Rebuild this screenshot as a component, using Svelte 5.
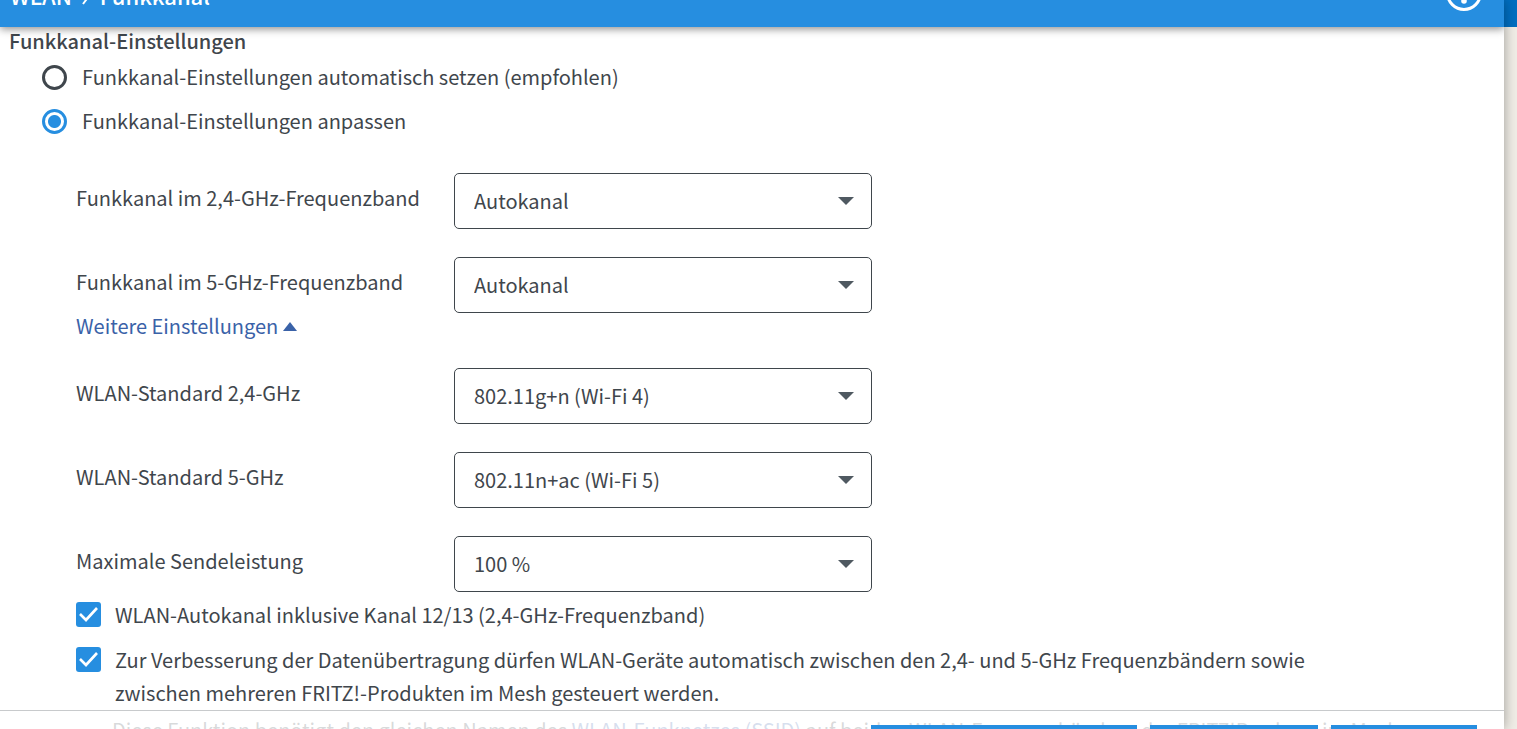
<script>
  let mode = "manual";
  let showMore = true;

  let channels = [
    { id: "channel24", label: "Funkkanal im 2,4-GHz-Frequenzband", value: "Autokanal" },
    { id: "channel5", label: "Funkkanal im 5-GHz-Frequenzband", value: "Autokanal" },
  ];

  let advanced = [
    { id: "standard24", label: "WLAN-Standard 2,4-GHz", value: "802.11g+n (Wi-Fi 4)" },
    { id: "standard5", label: "WLAN-Standard 5-GHz", value: "802.11n+ac (Wi-Fi 5)" },
    { id: "power", label: "Maximale Sendeleistung", value: "100 %" },
  ];

  let autoExtended = true;
  let steering = true;

  const toggleMore = () => {
    showMore = !showMore;
  };
</script>

{#snippet selectRow(item)}
  <div class="row">
    <label for={item.id}>{item.label}</label>
    <div class="select">
      <select id={item.id}>
        <option>{item.value}</option>
      </select>
      <svg width="16" height="8" viewBox="0 0 16 8" aria-hidden="true">
        <path d="M0 0h16L8 8z" fill="#4f5961" />
      </svg>
    </div>
  </div>
{/snippet}

<div class="panel">
  <header>
    <h1>
      WLAN
      <svg width="10" height="18" viewBox="0 0 10 18" aria-hidden="true">
        <path d="M2 1l6 8-6 8" fill="none" stroke="#fff" stroke-width="2" />
      </svg>
      Funkkanal
    </h1>
    <a class="help" href="#help" aria-label="Hilfe">
      <svg width="36" height="36" viewBox="0 0 36 36" aria-hidden="true">
        <circle cx="18" cy="18" r="16.5" fill="none" stroke="#fff" stroke-width="3" />
        <path d="M12 14c0-8 12-8 12 0 0 4-6 4-6 8" fill="none" stroke="#fff" stroke-width="3" />
        <circle cx="18" cy="26" r="2.8" fill="#fff" />
      </svg>
    </a>
  </header>

  <main>
    <h2>Funkkanal-Einstellungen</h2>

    <div class="modes">
      <label>
        <input type="radio" name="mode" value="auto" bind:group={mode} />
        Funkkanal-Einstellungen automatisch setzen (empfohlen)
      </label>
      <label>
        <input type="radio" name="mode" value="manual" bind:group={mode} />
        Funkkanal-Einstellungen anpassen
      </label>
    </div>

    {#if mode === "manual"}
      <div class="settings">
        <div class="rows">
          {#each channels as item}
            {@render selectRow(item)}
          {/each}
        </div>

        <button type="button" class="more" on:click={toggleMore}>
          Weitere Einstellungen
          <svg class:closed={!showMore} width="14" height="9" viewBox="0 0 14 9" aria-hidden="true">
            <path d="M0 9h14L7 0z" fill="#3a62a8" />
          </svg>
        </button>

        {#if showMore}
          <div class="rows">
            {#each advanced as item}
              {@render selectRow(item)}
            {/each}
          </div>

          <div class="checks">
            <label>
              <input type="checkbox" bind:checked={autoExtended} />
              <span>WLAN-Autokanal inklusive Kanal 12/13 (2,4-GHz-Frequenzband)</span>
            </label>
            <label>
              <input type="checkbox" bind:checked={steering} />
              <span>
                Zur Verbesserung der Datenübertragung dürfen WLAN-Geräte automatisch zwischen den 2,4- und
                5-GHz Frequenzbändern sowie zwischen mehreren FRITZ!-Produkten im Mesh gesteuert werden.
              </span>
            </label>
            <p>
              Diese Funktion benötigt den gleichen Namen des <a href="#ssid">WLAN-Funknetzes (SSID)</a>
              auf beiden WLAN-Frequenzbändern der FRITZ!Box bzw. im Mesh.
            </p>
          </div>
        {/if}
      </div>
    {/if}
  </main>

  <footer>
    <button type="button" class="wide" aria-label="Aktualisieren"></button>
    <button type="button" class="medium" aria-label="Übernehmen"></button>
    <button type="button" aria-label="Verwerfen"></button>
  </footer>
</div>

<style>
  :global(body) {
    background: linear-gradient(#006ec0 27px, #f0ede6 27px);
    overflow: hidden;
  }

  .panel,
  select,
  button {
    font-family: "Noto Sans CJK SC", "Open Sans", sans-serif;
    font-size: 20px;
    line-height: 33px;
    color: #3f464c;
  }

  .panel {
    position: relative;
    height: 100vh;
    margin-right: 13px;
    overflow: hidden;
    background: #fff;
    box-shadow: 0 0 12px rgba(0, 0, 0, 0.35);
  }

  header {
    position: relative;
    display: flex;
    align-items: flex-end;
    justify-content: space-between;
    box-sizing: border-box;
    height: 27px;
    padding: 0 22px 16px 10px;
    background: #268ee0;
    box-shadow: 0 2px 8px rgba(0, 0, 0, 0.45);
  }

  h1,
  h2,
  p {
    margin: 0;
    font-size: 20px;
    font-weight: 500;
  }

  h1 {
    display: flex;
    align-items: center;
    gap: 9px;
    color: #fff;
    font-size: 22px;
    line-height: 31px;
  }

  .help,
  .help svg {
    display: block;
  }

  main {
    padding-left: 9px;
  }

  h2 {
    line-height: 28px;
  }

  input {
    appearance: none;
    flex: none;
    width: 25px;
    height: 25px;
    margin: 4px 0;
  }

  .modes {
    display: flex;
    flex-direction: column;
    gap: 11px;
    padding: 6px 0 0 33px;
  }

  .modes label {
    display: flex;
    gap: 15px;
    line-height: 31px;
  }

  input[type="radio"] {
    border: 3px solid #3f464c;
    border-radius: 50%;
  }

  input[type="radio"]:checked {
    border-color: #268ee0;
    background: radial-gradient(circle, #268ee0 6px, #fff 7px);
  }

  .settings {
    padding: 35px 0 0 67px;
  }

  .rows {
    display: flex;
    flex-direction: column;
    gap: 28px;
  }

  .row {
    display: grid;
    grid-template-columns: 378px 418px;
  }

  .row label {
    padding-top: 8px;
  }

  .select {
    position: relative;
  }

  select {
    appearance: none;
    display: block;
    box-sizing: border-box;
    width: 100%;
    height: 56px;
    padding: 0 48px 2px 19px;
    border: 1px solid #3f464c;
    border-radius: 5px;
    background: #fff;
  }

  .select svg {
    position: absolute;
    top: 24px;
    right: 18px;
    pointer-events: none;
  }

  .more {
    display: flex;
    align-items: center;
    gap: 5px;
    margin-bottom: 29px;
    padding: 0;
    border: none;
    background: none;
    color: #3a62a8;
    line-height: 26px;
    cursor: pointer;
  }

  .closed {
    transform: rotate(180deg);
  }

  .checks {
    display: flex;
    flex-direction: column;
    gap: 12px;
    padding-top: 6px;
  }

  .checks label {
    display: flex;
    gap: 14px;
    padding-right: 120px;
  }

  input[type="checkbox"] {
    border: 1px solid #3f464c;
    border-radius: 3px;
  }

  input[type="checkbox"]:checked {
    border: none;
    background: #268ee0
      url("data:image/svg+xml,%3Csvg xmlns='http://www.w3.org/2000/svg' viewBox='0 0 25 25'%3E%3Cpath d='M4 12l6 6L21 6' fill='none' stroke='white' stroke-width='2.6'/%3E%3C/svg%3E");
  }

  .checks p {
    margin-top: -8px;
    padding-left: 36px;
    font-weight: 400;
    white-space: nowrap;
  }

  .checks a {
    color: #3a62a8;
    text-decoration: none;
  }

  footer {
    position: absolute;
    bottom: 0;
    left: 0;
    right: 0;
    display: flex;
    justify-content: flex-end;
    gap: 13px;
    box-sizing: border-box;
    height: 19px;
    padding: 14px 27px 0 0;
    border-top: 1px solid #c8cacc;
    background: rgba(255, 255, 255, 0.8);
  }

  footer button {
    flex: none;
    width: 146px;
    height: 56px;
    border: none;
    background: #268ee0;
  }

  footer .medium {
    width: 168px;
  }

  footer .wide {
    width: 266px;
  }
</style>
